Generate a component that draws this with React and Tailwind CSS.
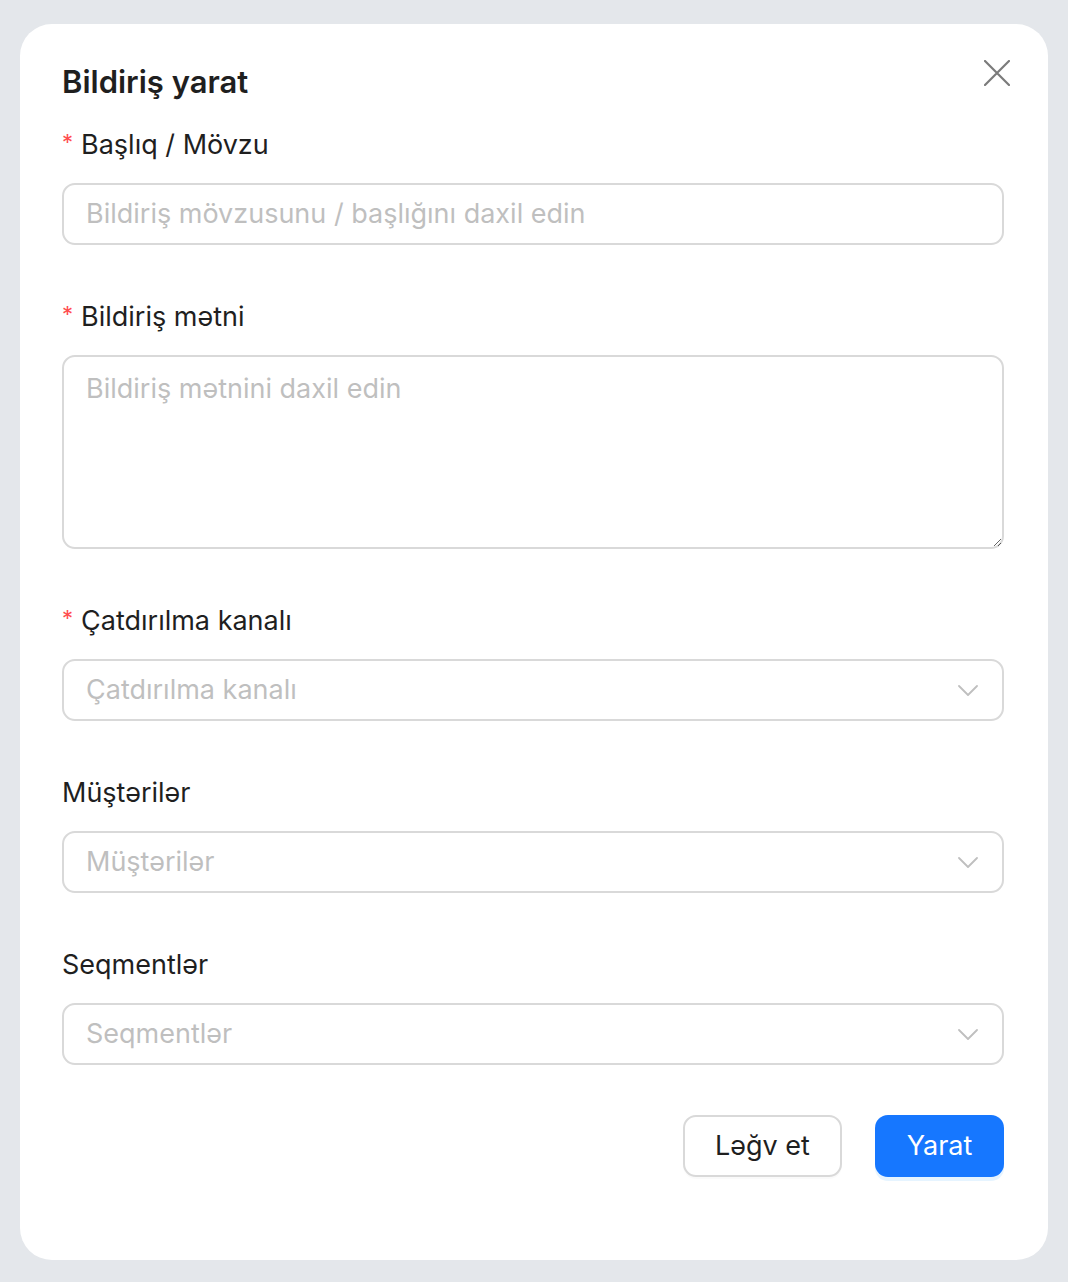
import React from "react";

const font = { fontFamily: "Inter, 'Noto Sans', sans-serif" };

const Chevron = () => (
  <svg width="20" height="11" viewBox="0 0 20 11" fill="none" className="shrink-0">
    <path d="M1 1l9 9 9-9" stroke="#bfbfbf" strokeWidth="1.8" strokeLinecap="round" strokeLinejoin="round" />
  </svg>
);

const Label = ({ required, children }) => (
  <div className="h-[44px] leading-[44px] mb-[16px] text-[27px] text-[#1f1f1f] flex items-center">
    {required && <span className="text-[#ff4d4f] text-[22px] mr-[8px] relative top-[-3px]">*</span>}
    {children}
  </div>
);

const SelectBox = ({ placeholder }) => (
  <div className="h-[62px] border-2 border-[#d9d9d9] rounded-[13px] pl-[22px] pr-[24px] flex items-center justify-between">
    <span className="text-[27px] text-[#bfbfbf]">{placeholder}</span>
    <Chevron />
  </div>
);

export default function App() {
  return (
    <div className="w-[1068px] h-[1282px] bg-[#e4e7eb] pt-[24px] pl-[20px]" style={font}>
      <div className="w-[1028px] h-[1236px] bg-white rounded-[32px] pl-[42px] pr-[44px] pt-[36px] relative">
        <button className="absolute right-[38px] top-[36px] w-[26px] h-[26px]" aria-label="close">
          <svg width="26" height="26" viewBox="0 0 26 26" fill="none">
            <path d="M1 1l24 24M25 1L1 25" stroke="#7b7b7b" strokeWidth="2.2" strokeLinecap="round" />
          </svg>
        </button>
        <h1 className="text-[31px] leading-[44px] font-semibold text-[#1f1f1f] mb-[19px]">Bildiriş yarat</h1>

        <div className="mb-[50px]">
          <Label required>Başlıq / Mövzu</Label>
          <div className="h-[62px] border-2 border-[#d9d9d9] rounded-[13px] px-[22px] flex items-center">
            <span className="text-[27px] text-[#bfbfbf]">Bildiriş mövzusunu / başlığını daxil edin</span>
          </div>
        </div>

        <div className="mb-[50px]">
          <Label required>Bildiriş mətni</Label>
          <textarea
            readOnly
            placeholder="Bildiriş mətnini daxil edin"
            className="block w-full h-[194px] border-2 border-[#d9d9d9] rounded-[13px] px-[22px] pt-[10px] text-[27px] leading-[44px] text-[#1f1f1f] placeholder:text-[#bfbfbf] outline-none resize-y"
            style={font}
          />
        </div>

        <div className="mb-[50px]">
          <Label required>Çatdırılma kanalı</Label>
          <SelectBox placeholder="Çatdırılma kanalı" />
        </div>

        <div className="mb-[50px]">
          <Label>Müştərilər</Label>
          <SelectBox placeholder="Müştərilər" />
        </div>

        <div>
          <Label>Seqmentlər</Label>
          <SelectBox placeholder="Seqmentlər" />
        </div>

        <div className="flex justify-end gap-[33px] mt-[50px]">
          <button className="w-[159px] h-[62px] border-2 border-[#d9d9d9] rounded-[13px] text-[27px] text-[#1f1f1f] bg-white shadow-[0_2px_0_rgba(0,0,0,0.02)]">
            Ləğv et
          </button>
          <button className="w-[129px] h-[62px] rounded-[13px] text-[27px] text-white bg-[#1677ff] shadow-[0_4px_0_rgba(5,145,255,0.1)]">
            Yarat
          </button>
        </div>
      </div>
    </div>
  );
}
